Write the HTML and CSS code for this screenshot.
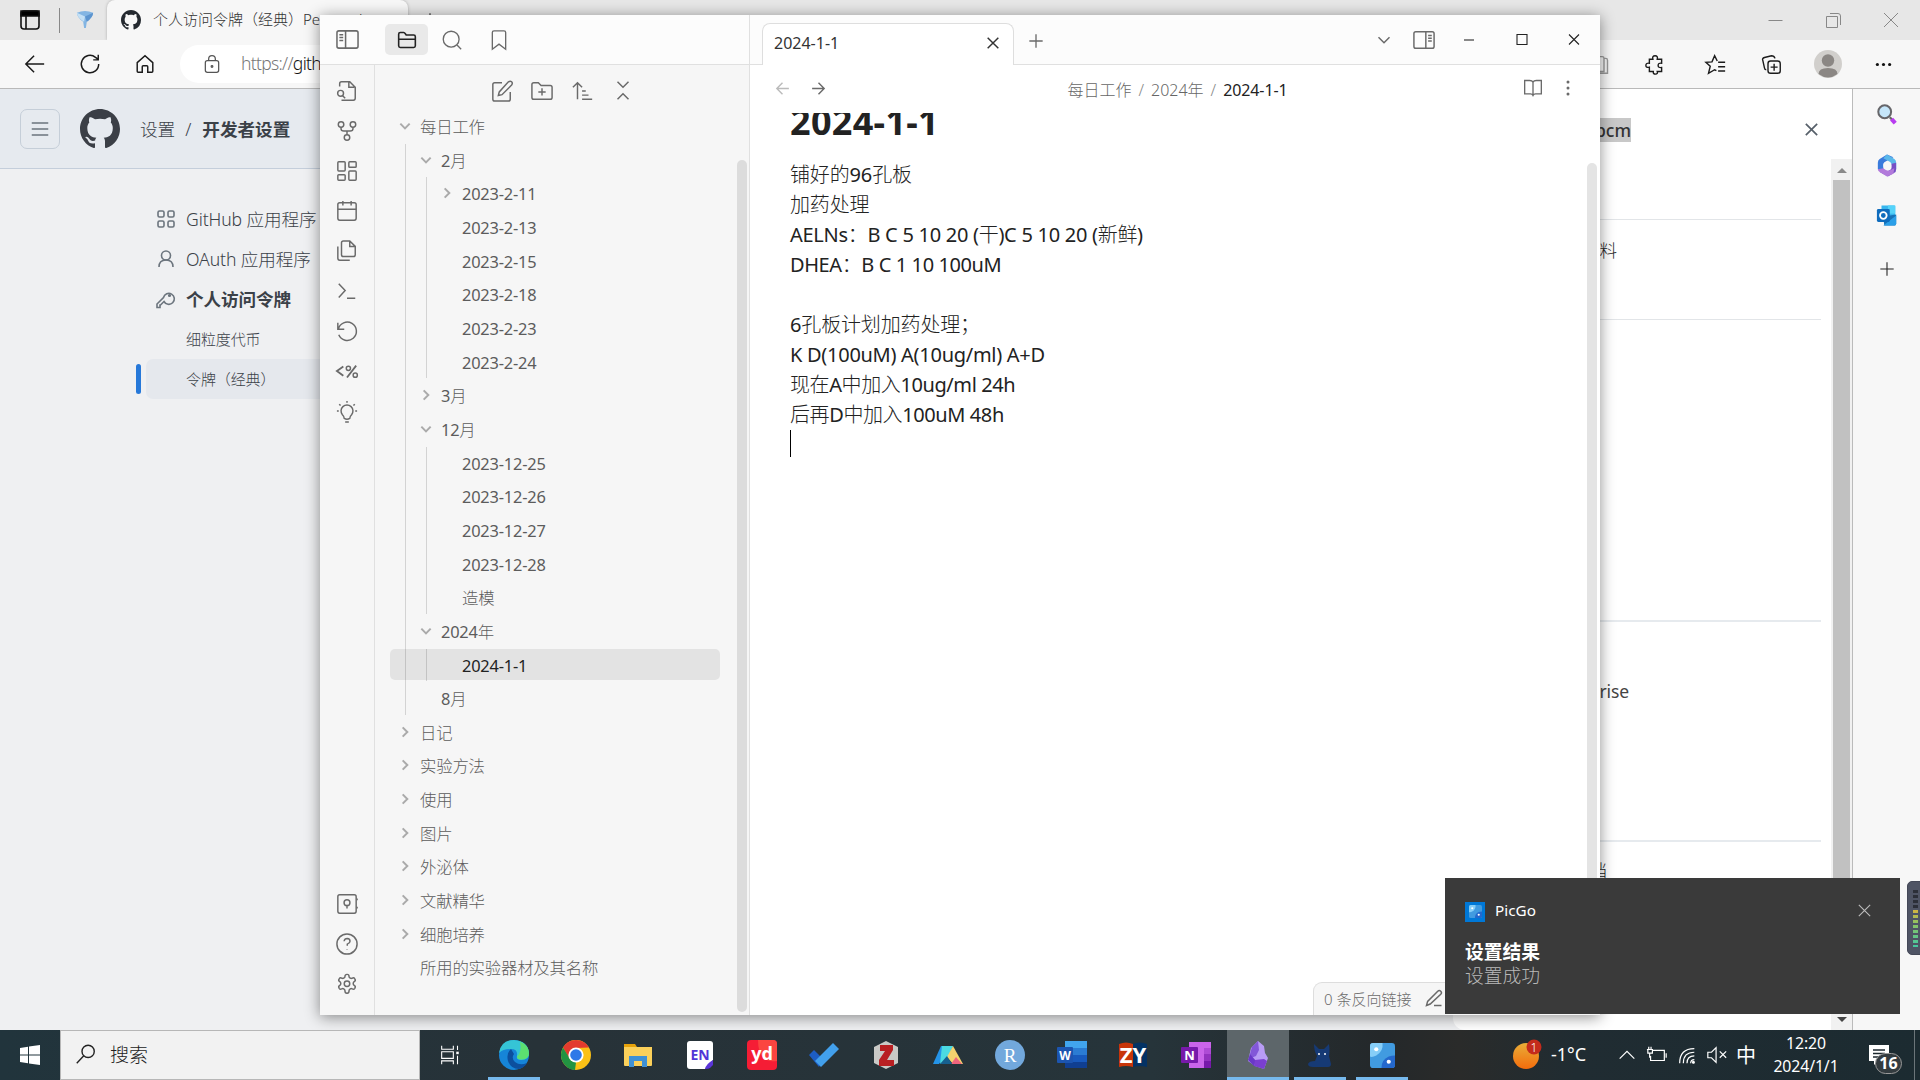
FILE: index.html
```html
<!DOCTYPE html>
<html lang="zh-CN">
<head>
<meta charset="utf-8">
<title>2024-1-1 - Obsidian</title>
<link rel="stylesheet" href="styles.css">
</head>
<body>
<svg class="sprite" aria-hidden="true">
  <symbol id="github" viewBox="0 0 16 16"><path fill="currentColor" stroke="none" d="M8 0C3.58 0 0 3.58 0 8c0 3.54 2.29 6.53 5.47 7.59.4.07.55-.17.55-.38 0-.19-.01-.82-.01-1.49-2.01.37-2.53-.49-2.69-.94-.09-.23-.48-.94-.82-1.13-.28-.15-.68-.52-.01-.53.63-.01 1.08.58 1.23.82.72 1.21 1.87.87 2.33.66.07-.52.28-.87.51-1.07-1.78-.2-3.64-.89-3.64-3.95 0-.87.31-1.59.82-2.15-.08-.2-.36-1.02.08-2.12 0 0 .67-.21 2.2.82.64-.18 1.32-.27 2-.27.68 0 1.36.09 2 .27 1.53-1.04 2.2-.82 2.2-.82.44 1.1.16 1.92.08 2.12.51.56.82 1.27.82 2.15 0 3.07-1.87 3.75-3.65 3.95.29.25.54.73.54 1.48 0 1.07-.01 1.93-.01 2.2 0 .21.15.46.55.38A8.013 8.013 0 0016 8c0-4.42-3.58-8-8-8z"/></symbol>
  <symbol id="down" viewBox="0 0 24 24"><path d="m4 8 8 8 8-8"/></symbol>
  <symbol id="right" viewBox="0 0 24 24"><path d="m8 4 8 8-8 8"/></symbol>
  <symbol id="close" viewBox="0 0 24 24"><path d="M4 4l16 16M20 4 4 20"/></symbol>
  <symbol id="plus" viewBox="0 0 24 24"><path d="M12 2v20M2 12h20"/></symbol>
  <symbol id="picgo" viewBox="0 0 24 24"><rect width="24" height="24" rx="3" fill="#419be0" stroke="none"/><path fill="#86ceF8" stroke="none" d="M3 0h9q1 8-6 12-4 2-6 1V3q0-3 3-3z"/><path fill="#2468cc" stroke="none" d="M24 12v9q0 3-3 3H11q0-8 7-11 3-1 6-1z"/><circle cx="6" cy="6" r="2" fill="#fff" stroke="none"/><circle cx="18" cy="18" r="2" fill="#fff" stroke="none"/></symbol>
</svg>

<div class="browser">
  <div class="tabstrip">
    <svg class="tabs-menu" viewBox="0 0 24 24"><rect x="3" y="3" width="18" height="18" rx="3"/><path fill="#000" d="M3 3h18v5H3zM8 8v13"/></svg>
    <i class="strip-sep"></i>
    <svg class="filter" viewBox="0 0 20 20"><path fill="#83b5e3" d="M1 2q9-4 18 0 0 5-7 10l-1 7H9l-1-7Q1 7 1 2z"/><path fill="#c4e0f5" d="M1 2l9 4-1 6Q1 7 1 2z"/><path fill="#5c94cf" d="M19 2l-9 4 2 6q7-5 7-10z"/></svg>
    <div class="browser-tab"><svg><use href="#github"/></svg><span>个人访问令牌（经典）Personal</span></div>
    <svg class="new-tab" viewBox="0 0 24 24"><use href="#plus"/></svg>
    <div class="win-buttons">
      <svg viewBox="0 0 24 24"><path d="M4.500 12.500h14"/></svg>
      <svg viewBox="0 0 24 24"><path d="M5.500 8.500h11v11h-11zM9 5.500h8q2.500 0 2.500 2.500v9"/></svg>
      <svg viewBox="0 0 24 24"><path d="m5 5 14 14M19 5 5 19"/></svg>
    </div>
  </div>
  <div class="navbar">
    <svg viewBox="0 0 24 24"><path d="M22 12H2M11 3l-9 9 9 9"/></svg>
    <svg viewBox="0 0 24 24"><path d="M21.500 12A9.500 9.500 0 1 1 18 4.700L21 7M21 2v5.500h-5.500"/></svg>
    <svg viewBox="0 0 24 24"><path d="M3.500 10.500 12 3l8.500 7.500V20q0 1-1 1H15v-6q0-1-1-1h-4q-1 0-1 1v6H4.500q-1 0-1-1z"/></svg>
    <div class="address">
      <svg viewBox="0 0 24 24"><rect x="4" y="8" width="16" height="14" rx="2.500"/><path d="M8 8V6q0-4 4-4t4 4v2"/><circle cx="12" cy="15" r="1"/></svg>
      <span><em>https://</em>github.com</span>
    </div>
    <div class="nav-tools">
      <svg class="split" viewBox="0 0 24 24"><path d="M4 3h10q2 0 2 2v15H4zM16 5h2q2 0 2 2v15H9"/></svg>
      <svg viewBox="0 0 24 24"><path d="M5 6h4q-1-4 2.500-4T14 6h5v4.500q-4-.5-4 2.500t4 2.500V20h-5q1 3-2 3t-2.500-3H5v-5q-4 1-4-2t4-2.500z"/></svg>
      <i></i>
      <svg viewBox="0 0 24 24"><path d="M14 8 11 2 8 9l-7 .5L6 14l-2 8 7-4 2 1M15 9.500h8M15 14.500h8M15 19.500h8"/></svg>
      <svg viewBox="0 0 24 24"><rect x="8" y="8" width="14" height="14" rx="3"/><path d="M15 11v8M11 15h8M6 18q-2 0-2-2L2 7q-1-2 2-3l8-2q3 0 4 3"/></svg>
      <svg class="avatar" viewBox="0 0 28 28"><circle cx="14" cy="14" r="14" fill="#d1cfcc"/><circle cx="14" cy="10.500" r="6.200" fill="#8b8784"/><path fill="#8b8784" d="M4.500 24q0-6 9.500-6t9.500 6Q14 31 4.500 24z"/></svg>
      <svg class="dots" viewBox="0 0 24 24"><circle cx="5" cy="12" r="1.800"/><circle cx="12" cy="12" r="1.800"/><circle cx="19" cy="12" r="1.800"/></svg>
    </div>
  </div>
  <div class="viewport">
    <div class="page">
      <div class="gh-header">
        <span class="burger"><svg viewBox="0 0 24 24"><path d="M1 4h22M1 12h22M1 20h22"/></svg></span>
        <svg class="gh-mark"><use href="#github"/></svg>
        <span class="gh-path">设置</span><span class="gh-slash">/</span><b>开发者设置</b>
      </div>
      <div class="gh-nav">
        <div class="gh-item"><svg viewBox="0 0 20 20"><rect x="2" y="2" width="6" height="6" rx="1.500"/><rect x="12" y="2" width="6" height="6" rx="1.500"/><rect x="2" y="12" width="6" height="6" rx="1.500"/><rect x="12" y="12" width="6" height="6" rx="1.500"/></svg>GitHub 应用程序</div>
        <div class="gh-item"><svg viewBox="0 0 20 20"><circle cx="10" cy="6.500" r="4.500"/><path d="M3 18q0-7 7-7t7 7"/></svg>OAuth 应用程序</div>
        <div class="gh-item strong"><svg viewBox="0 0 20 20"><path d="M8 12.500 4.500 16H4v2.500H1V15l6.500-6.500A5.500 5.500 0 1 1 8 12.500z"/><circle cx="13.500" cy="6.500" r=".8"/></svg>个人访问令牌</div>
        <div class="gh-item sub">细粒度代币</div>
        <div class="gh-item sub current">令牌（经典）</div>
      </div>
      <div class="drawer">
        <div class="drawer-head"><span><mark>bcm</mark></span><svg viewBox="0 0 24 24"><use href="#close"/></svg></div>
        <div class="drawer-body">
          <div class="group g1"></div>
          <div class="group g2"><span>料</span></div>
          <div class="group g3"></div>
          <div class="group g4"><span>Enterprise</span></div>
          <div class="group g5"><span>档</span></div>
        </div>
      </div>
      <div class="page-scroll"><svg viewBox="0 0 12 8"><path d="m0 7 6-6 6 6z"/></svg><i></i><svg class="low" viewBox="0 0 12 8"><path d="m0 1 6 6 6-6z"/></svg></div>
    </div>
    <div class="edge-side">
      <svg viewBox="0 0 24 24"><circle cx="9.500" cy="9" r="7" fill="#c5e6fa" stroke="#66666a" stroke-width="2.200"/><path d="m15 15 2.500 2.500" stroke="#666" stroke-width="2.500"/><path d="m17 17 4 4.500" stroke="#b83cf0" stroke-width="4.500"/></svg>
      <svg viewBox="0 0 24 24"><path fill="#3a7bdc" d="M12 0 4 5Q2 6 2 9v7l6 4V11q0-2 2-3l9-5z"/><path fill="#5ab8ea" d="m12 0 8 5q2 1 2 4v7l-5-5q0-2-2-3L8 4z"/><path fill="#7550c5" d="M22 9v7q0 3-2 4l-7 4-9-5 9-1q4-1 4-4v-4z"/><path fill="#b27adb" d="m2 16 6-1q4 4 8 2l4-2-1 6-7 3-8-5q-2-1-2-3z"/><circle cx="12" cy="12" r="4" fill="#f7f7f7"/></svg>
      <svg viewBox="0 0 24 24"><path fill="#37b6ee" d="M6 1h14l1 1v16H6z"/><path fill="#55d3fa" d="M13 1h8v9h-8z"/><path fill="#1673b8" d="m8 13 14-2v10l-1 2H9z"/><path fill="#2a9fe8" d="m8 23 14-11v9q0 2-2 2z"/><rect x="1" y="5" width="14" height="14" rx="1.500" fill="#0f6cbd"/><circle cx="8" cy="12" r="3.600" stroke="#fff" stroke-width="2"/></svg>
      <svg class="add" viewBox="0 0 24 24"><use href="#plus"/></svg>
    </div>
  </div>
</div>

<div class="obsidian">
  <div class="left-top">
    <svg viewBox="0 0 24 24"><rect x="1" y="3" width="22" height="18" rx="2"/><path d="M10 3v18M3.500 7h4M3.500 10h4M3.500 13h4"/></svg>
    <span class="active-tool"><svg viewBox="0 0 24 24"><path d="M2 19V5q0-2 2-2h4q1 0 2 1.500L11 6h9q2 0 2 2v11q0 2-2 2H4q-2 0-2-2zM2 11h20"/></svg></span>
    <svg viewBox="0 0 24 24"><circle cx="11" cy="11" r="9.500"/><path d="m18 18 5 5"/></svg>
    <svg viewBox="0 0 24 24"><path d="m20 23-8-6-8 6V3q0-2 2-2h12q2 0 2 2z"/></svg>
  </div>
  <div class="main-top">
    <div class="note-tab"><span>2024-1-1</span><svg viewBox="0 0 24 24"><use href="#close"/></svg></div>
    <svg class="tab-add" viewBox="0 0 24 24"><use href="#plus"/></svg>
    <div class="app-buttons">
      <svg viewBox="0 0 24 24"><path d="m6 9 6 6 6-6"/></svg>
      <svg viewBox="0 0 24 24"><rect x="1" y="3" width="22" height="18" rx="2"/><path d="M14 3v18M16.500 7h4M16.500 10h4M16.500 13h4"/></svg>
      <svg viewBox="0 0 24 24"><path d="M7 12h10"/></svg>
      <svg viewBox="0 0 24 24"><path d="M7 6.500h10v10H7z"/></svg>
      <svg viewBox="0 0 24 24"><path d="m7 6.500 10 10M17 6.500l-10 10"/></svg>
    </div>
  </div>
  <div class="ribbon">
    <svg viewBox="0 0 24 24"><path d="M4 7V4q0-2 2-2h9l6 6v12q0 2-2 2H6M14 2v6h6"/><circle cx="5" cy="14.500" r="3.200"/><path d="m7 17 3 3"/></svg>
    <svg viewBox="0 0 24 24"><circle cx="12" cy="19" r="3"/><circle cx="5.500" cy="5" r="3"/><circle cx="18.500" cy="5" r="3"/><path d="M5.500 8v1.500q0 2.500 3 2.500h7q3 0 3-2.500V8M12 12v4"/></svg>
    <svg viewBox="0 0 24 24"><rect x="2" y="2" width="8" height="10" rx="1"/><rect x="14" y="2" width="8" height="6" rx="1"/><rect x="14" y="12" width="8" height="10" rx="1"/><rect x="2" y="16" width="8" height="6" rx="1"/></svg>
    <svg viewBox="0 0 24 24"><rect x="2" y="3" width="20" height="19" rx="2"/><path d="M2 10h20M7.500 1v5M16.500 1v5"/></svg>
    <svg viewBox="0 0 24 24"><path d="M15 1H8Q6 1 6 3v13q0 2 2 2h11q2 0 2-2V7zM15 1v6h6M2 7v13q0 2 2 2h11"/></svg>
    <svg viewBox="0 0 24 24"><path d="m3 4 7 7.500L3 19M12 20h9"/></svg>
    <svg viewBox="0 0 24 24"><path d="M2 2v7h7M2.500 9A10 10 0 1 1 3 15"/></svg>
    <svg viewBox="0 0 24 24"><path stroke-width="2" d="M8 6 1 11l7 5M22 5 12 18"/><circle cx="13.500" cy="8" r="2.300"/><circle cx="21" cy="15.500" r="2.300"/></svg>
    <svg viewBox="0 0 24 24"><path d="M9 19q0-2-2-4a6.500 6.500 0 1 1 10 0q-2 2-2 4-3 2-6 0zM10 23h4M12 0v2M1 11h2M21 11h2M3.500 3.500 5 5M20.500 3.500 19 5"/></svg>
    <span class="fill"></span>
    <svg viewBox="0 0 24 24"><rect x="2" y="2" width="20" height="20" rx="2"/><circle cx="12" cy="10.500" r="3.200"/><path d="M12 14v3M23 6v2M23 15v2"/></svg>
    <svg viewBox="0 0 24 24"><circle cx="12" cy="12" r="11"/><path d="M8.800 9q.5-3 3.500-3 3 .3 3 3 0 2-3 3.200V14M12 17.500v.5"/></svg>
    <svg viewBox="0 0 24 24"><path d="M12.200 1.500h-.4a2 2 0 0 0-2 2v.2a2 2 0 0 1-1 1.700l-.4.300a2 2 0 0 1-2 0l-.2-.1a2 2 0 0 0-2.700.7l-.2.400a2 2 0 0 0 .7 2.700l.2.100a2 2 0 0 1 1 1.700v.5a2 2 0 0 1-1 1.800l-.2.100a2 2 0 0 0-.7 2.700l.2.400a2 2 0 0 0 2.700.7l.2-.1a2 2 0 0 1 2 0l.4.300a2 2 0 0 1 1 1.700v.7a2 2 0 0 0 2 2h.4a2 2 0 0 0 2-2v-.7a2 2 0 0 1 1-1.700l.4-.3a2 2 0 0 1 2 0l.2.100a2 2 0 0 0 2.700-.7l.2-.4a2 2 0 0 0-.7-2.700l-.2-.1a2 2 0 0 1-1-1.800v-.5a2 2 0 0 1 1-1.700l.2-.1a2 2 0 0 0 .7-2.700l-.2-.4a2 2 0 0 0-2.700-.7l-.2.100a2 2 0 0 1-2 0l-.4-.3a2 2 0 0 1-1-1.700v-.2a2 2 0 0 0-2-2z"/><circle cx="12" cy="11.800" r="3"/></svg>
  </div>
  <div class="explorer">
    <div class="explorer-tools">
      <svg viewBox="0 0 24 24"><path d="M12 3H4Q2 3 2 5v16q0 2 2 2h15q2 0 2-2v-8M19 2q2-1.500 3.500 0t0 3.500L12 16l-4 1 1-4z"/></svg>
      <svg viewBox="0 0 24 24"><path d="M1 19V5q0-2 2-2h5l3 3h10q2 0 2 2v11q0 2-2 2H3q-2 0-2-2zM12 9v8M8 13h8"/></svg>
      <svg viewBox="0 0 24 24"><path d="M1 8l5-5 5 5M6 3v18M11 12h4M11 16.500h7M11 21h11"/></svg>
      <svg viewBox="0 0 24 24"><path d="m6 2 6 6 6-6M6 21l6-6 6 6"/></svg>
    </div>
    <div class="tree">
      <div class="row"><svg><use href="#down"/></svg>每日工作</div>
      <div class="kids">
        <div class="row"><svg><use href="#down"/></svg>2月</div>
        <div class="kids">
          <div class="row"><svg><use href="#right"/></svg>2023-2-11</div>
          <div class="row">2023-2-13</div>
          <div class="row">2023-2-15</div>
          <div class="row">2023-2-18</div>
          <div class="row">2023-2-23</div>
          <div class="row">2023-2-24</div>
        </div>
        <div class="row"><svg><use href="#right"/></svg>3月</div>
        <div class="row"><svg><use href="#down"/></svg>12月</div>
        <div class="kids">
          <div class="row">2023-12-25</div>
          <div class="row">2023-12-26</div>
          <div class="row">2023-12-27</div>
          <div class="row">2023-12-28</div>
          <div class="row">造模</div>
        </div>
        <div class="row"><svg><use href="#down"/></svg>2024年</div>
        <div class="kids">
          <div class="row open">2024-1-1</div>
        </div>
        <div class="row">8月</div>
      </div>
      <div class="row"><svg><use href="#right"/></svg>日记</div>
      <div class="row"><svg><use href="#right"/></svg>实验方法</div>
      <div class="row"><svg><use href="#right"/></svg>使用</div>
      <div class="row"><svg><use href="#right"/></svg>图片</div>
      <div class="row"><svg><use href="#right"/></svg>外泌体</div>
      <div class="row"><svg><use href="#right"/></svg>文献精华</div>
      <div class="row"><svg><use href="#right"/></svg>细胞培养</div>
      <div class="row">所用的实验器材及其名称</div>
    </div>
    <i class="tree-scroll"></i>
  </div>
  <div class="editor">
    <div class="view-header">
      <svg class="dim" viewBox="0 0 24 24"><path d="M21 12H4M12 4l-8 8 8 8"/></svg>
      <svg viewBox="0 0 24 24"><path d="M3 12h17M12 4l8 8-8 8"/></svg>
      <div class="crumbs"><span>每日工作</span><em>/</em><span>2024年</span><em>/</em><b>2024-1-1</b></div>
      <svg class="book" viewBox="0 0 24 24"><path d="M12 5q-1-2-4-2H2v16h7q2 0 3 2 1-2 3-2h7V3h-6q-3 0-4 2zM12 5v16"/></svg>
      <svg class="more" viewBox="0 0 24 24"><circle cx="12" cy="4" r="1"/><circle cx="12" cy="12" r="1"/><circle cx="12" cy="20" r="1"/></svg>
    </div>
    <div class="note">
      <h1>2024-1-1</h1>
      <p>铺好的96孔板</p>
      <p>加药处理</p>
      <p class="dose">AELNs：B C 5 10 20 (干)C 5 10 20 (新鲜)</p>
      <p class="mixed">DHEA：B C 1 10 100uM</p>
      <p></p>
      <p>6孔板计划加药处理；</p>
      <p class="dose">K D(100uM) A(10ug/ml) A+D</p>
      <p class="mixed">现在A中加入10ug/ml 24h</p>
      <p class="mixed">后再D中加入100uM 48h</p>
      <p><i class="caret"></i></p>
    </div>
    <i class="note-scroll"></i>
    <div class="status"><span>0 条反向链接</span><svg viewBox="0 0 24 24"><path d="M12 22h10M17 3q2-2 4 0t0 4L7 20l-5 2 1.500-5.500z"/></svg></div>
  </div>
</div>

<div class="toast">
  <div class="toast-app"><span class="toast-icon"><svg><use href="#picgo"/></svg></span><span>PicGo</span><svg class="toast-close" viewBox="0 0 24 24"><use href="#close"/></svg></div>
  <b>设置结果</b>
  <p>设置成功</p>
</div>
<div class="meter"><i></i></div>

<div class="taskbar">
  <div class="start"><svg viewBox="0 0 20 20"><path fill="#fff" d="M0 3l8-1.200V9.500H0zM9 1.600 20 0v9.500H9zM0 10.500h8v7.700L0 17zM9 10.500h11V20L9 18.400z"/></svg></div>
  <div class="search"><svg viewBox="0 0 24 24"><circle cx="15" cy="8.500" r="7"/><path d="M10 13.500 2 22"/></svg>搜索</div>
  <div class="apps">
    <span class="slot tv"><svg viewBox="0 0 24 24"><path d="M2 1v4h14V1M2 23v-4h14v4M2 8h14v8H2zM21 1v5M21 13v10"/><path fill="#fff" stroke="none" d="M19.500 8h3v3h-3z"/></svg></span>
    <span class="slot run"><svg viewBox="0 0 30 30"><circle cx="15" cy="15" r="15" fill="#1685d8"/><path fill="#35c4d6" d="M0 13Q2 0 15 0q14 1 15 13 0 7-8 7-5 0-4-4 1-7-6-7-8 0-12 4z"/><path fill="#5ce070" d="M21 1.500q9 4 9 12 0 6-8 6-4 0-4-3 5-4 3-15z"/><path fill="#0c4f9e" d="M12 9q-5 4-3 12 3 8 11 8 6-2 8-6-7 3-12-1-4-4-1-8z"/></svg></span>
    <span class="slot"><svg viewBox="0 0 30 30"><circle cx="15" cy="15" r="15" fill="#fbc116"/><path fill="#e33b2e" d="M2 7.500A15 15 0 0 1 28 7.500L15 8l-6.500 11z"/><path fill="#229342" d="M2 7.500 9 19l6 3.500L14 30A15 15 0 0 1 2 7.500z"/><circle cx="15" cy="15" r="7.600" fill="#fff"/><circle cx="15" cy="15" r="5.800" fill="#2f79e8"/></svg></span>
    <span class="slot"><svg viewBox="0 0 30 30"><path fill="#e6a20b" d="M1 4h11l2 3v5H1z"/><path fill="#fbd05a" d="M1 7h28v18q0 1-1 1H2q-1 0-1-1z"/><path fill="#3f90d4" d="M6 27V16h18v11h-5v-6h-8v6z"/></svg></span>
    <span class="slot"><svg viewBox="0 0 30 30"><path fill="#fff" d="M5 1h20q3 0 3 3v16l-8 9H5q-3 0-3-3V4q0-3 3-3z"/><path fill="#5a35d8" d="M28 20v5l-3 3q-1 1-5 1 1-5 8-9z"/><text x="15" y="20" font-size="14" font-weight="700" fill="#5236d6">EN</text></svg></span>
    <span class="slot"><svg viewBox="0 0 30 30"><rect width="30" height="30" rx="4" fill="#f51d35"/><path fill="#fb4540" d="M11 0h15q4 0 4 4v17Q11 24 11 0z"/><text x="15" y="20" font-size="18" font-weight="700" fill="#fff">yd</text></svg></span>
    <span class="slot"><svg viewBox="0 0 30 30"><path fill="#1d5dc4" d="m0 15 5-5 9 9-4 8z"/><path fill="#42a0ec" d="M24 3l6 6-18 18-6-6z"/></svg></span>
    <span class="slot"><svg viewBox="0 0 30 30"><path fill="#c9c9c6" d="M15 1 27 7v16l-12 6L3 23V7z"/><path fill="#b81f22" d="M9 5h13v5l-6 10h7v6H8v-6l6-9H9z"/></svg></span>
    <span class="slot"><svg viewBox="0 0 30 30"><path fill="#2494e8" d="M8 6h12L6 24H0z"/><path fill="#4bdae2" d="M9 6h11L14 20 7 24z"/><path fill="#f5d36e" d="M20 6 30 24H20l-6-7z"/><path fill="#f1657d" d="m23 17 6 7H18z"/><path fill="#17608f" d="m14 16 5 8H7z"/></svg></span>
    <span class="slot"><svg viewBox="0 0 30 30"><circle cx="15" cy="15" r="15" fill="#72a8dc"/><text class="serif" x="15" y="21.500" font-size="19" fill="#fff">R</text></svg></span>
    <span class="slot"><svg viewBox="0 0 30 30"><path fill="#41a5ee" d="M8 1h22v7H8z"/><path fill="#2b7cd3" d="M8 8h22v7H8z"/><path fill="#185abd" d="M8 15h22v7H8z"/><path fill="#103f91" d="M8 22h22v6H8z"/><rect y="7" width="16" height="16" rx="1" fill="#1c55b0"/><text x="8" y="19.500" font-size="12" font-weight="700" fill="#fff">W</text></svg></span>
    <span class="slot zy"><svg viewBox="0 0 30 30"><path fill="#c8350a" d="M1 4q7-3 14 0v23q-7-2-14 0z"/><path fill="#043264" d="M15 4q7-3 14 0v23q-7-2-14 0z"/><text x="15" y="23" font-size="22" font-weight="700" fill="#fff">ZY</text></svg></span>
    <span class="slot"><svg viewBox="0 0 30 30"><path fill="#ca64ea" d="M8 2h22v26H8z"/><path fill="#ae4bd5" d="M23 8h7v6h-7z"/><path fill="#9332bf" d="M23 14h7v7h-7z"/><path fill="#7719aa" d="M23 21h7v7h-7z"/><rect y="7" width="17" height="16" rx="1" fill="#7719aa"/><text x="8.500" y="19.500" font-size="13" font-weight="700" fill="#fff">N</text></svg></span>
    <span class="slot run focus"><svg viewBox="0 0 30 30"><path fill="#b89cf5" d="m15 1 6 5 1 7 3 5-4 11-9-3-7-5 3-13z"/><path fill="#8257d8" d="m15 1 1 9-3 6-5 2-1-4 2-7z"/><path fill="#6a38c8" d="m7 14 6 7-2 5-6-6z"/><path fill="#7a3fd0" d="m12 20 9-1 3 2-3 8-10-3z"/></svg></span>
    <span class="slot run cat"><svg viewBox="0 0 30 30"><path fill="#163a75" d="M9 4l5 5h5l5-5q1 8 0 12l2 8q0 3-3 3H8q-5 0-5-3 1-3 7-3l2-5q-3-5-3-12z"/><circle cx="14" cy="14" r="1" fill="#fff"/><circle cx="20" cy="14" r="1" fill="#fff"/></svg></span>
    <span class="slot run"><svg class="small"><use href="#picgo"/></svg></span>
  </div>
  <div class="tray">
    <svg class="weather" viewBox="0 0 32 32"><defs><linearGradient id="sun" x2="0" y2="1"><stop offset="0" stop-color="#e9ad38"/><stop offset="1" stop-color="#f46c0c"/></linearGradient></defs><circle cx="13" cy="17" r="13" fill="url(#sun)"/><circle cx="21" cy="8" r="7.500" fill="#c42b1c"/><text x="21" y="12.500" font-size="12" fill="#fff">1</text></svg>
    <span class="temp">-1°C</span>
    <svg class="t-up" viewBox="0 0 24 24"><path d="m4 16 8-8 8 8"/></svg>
    <svg class="t-bat" viewBox="0 0 24 24"><path d="M7 7h13v11H5v-5M22 10v5M1 6h6v4H2V6M3 3v3M5.500 3v3M4 10v5"/></svg>
    <svg class="t-wifi" viewBox="0 0 24 24"><path d="M4 21Q4 5 20 5M8 21Q8 9 20 9M12 21q0-8 8-8M16 21q0-4 4-4"/><circle cx="19" cy="20" r="1" fill="#fff"/></svg>
    <svg class="t-vol" viewBox="0 0 24 24"><path d="M2 9h4l5-5v16l-5-5H2zM15 8l7 7M22 8l-7 7"/></svg>
    <span class="ime">中</span>
    <div class="clock"><span>12:20</span><span>2024/1/1</span></div>
    <div class="notice"><svg viewBox="0 0 20 20"><path fill="#fff" d="M0 0h20v16H9l-4 4v-4H0z"/><path stroke="#1d292f" stroke-width="1.500" d="M4 5h12M4 8.500h12M4 12h8"/></svg><b>16</b></div>
    <i class="peek"></i>
  </div>
</div>
</body>
</html>
```
FILE: styles.css
```css
* { box-sizing: border-box; }
body {
  margin: 0; width: 1920px; height: 1080px; overflow: hidden; position: relative;
  font-family: "Noto Sans", "Noto Sans CJK SC", sans-serif; font-weight: 300;
  background: #eff0f2; color: #222;
}
svg { display: block; flex: none; fill: none; stroke: currentColor; stroke-width: 1.6; width: 20px; height: 20px; overflow: visible; }
i, em { font-style: normal; }
span { white-space: nowrap; }
.sprite { position: absolute; width: 0; height: 0; }

/* browser window */
.browser { position: absolute; inset: 0 0 50px; display: flex; flex-direction: column; }
.tabstrip { height: 40px; background: #e7e7e7; display: flex; flex: none; align-items: center; padding-left: 18px; }
.tabs-menu { width: 24px; height: 24px; color: #111; }
.strip-sep { width: 1px; height: 25px; background: #888; margin: 0 16px 0 17px; }
.filter { width: 18px; height: 20px; stroke: none; margin-right: 13px; }
.browser-tab {
  width: 301px; height: 40px; background: #f7f7f7; border-radius: 8px 8px 0 0; box-shadow: 0 0 3px #aaa;
  display: flex; align-items: center; padding-left: 14px; gap: 12px; font-size: 15px; line-height: 20px; color: #333; overflow: hidden;
}
.browser-tab span { margin-top: -3px; }
.browser-tab svg { color: #24292f; }
.new-tab { width: 16px; height: 16px; margin-left: 14px; }
.win-buttons { margin-left: auto; display: flex; gap: 34px; padding-right: 17px; color: #888; }
.win-buttons svg { width: 24px; height: 24px; stroke-width: 1; }
.win-buttons svg:first-child { margin-right: -1px; }
.navbar { height: 49px; flex: none; background: #f7f7f7; border-bottom: 1px solid #b9b9b9; display: flex; align-items: center; padding-left: 24px; color: #1b1b1b; }
.navbar > svg { width: 22px; height: 22px; margin-right: 33px; }
.address { height: 38px; width: 1500px; margin-left: -9px; background: #fff; border-radius: 19px 0 0 19px; display: flex; align-items: center; padding-left: 22px; gap: 19px; font-size: 17.5px; color: #111; letter-spacing: -.7px; }
.address span { margin-top: -2px; }
.address svg { color: #555; stroke-width: 1.5; }
.address em { color: #777; }
.nav-tools { display: flex; align-items: center; margin-left: -88px; background: #f7f7f7; height: 48px; width: 328px; }
.nav-tools svg { width: 21px; height: 21px; margin-right: 35px; }
.nav-tools .split { color: #999; margin-right: 34px; margin-left: -2px; }
.nav-tools i { width: 1px; height: 20px; background: #bbb; margin: 0 20px 0 -16px; }
.nav-tools svg:nth-of-type(4) { margin-right: 33px; }
.nav-tools svg.avatar { width: 28px; height: 28px; stroke: none; margin: 0 31px 0 -1px; }
.nav-tools .dots { fill: #111; stroke: none; }
.viewport { flex: 1; display: flex; min-height: 0; }
.page { width: 1853px; position: relative; border-right: 1px solid #bbb; overflow: hidden; background: #eff0f2; }
.gh-header { height: 80px; background: #e6eaef; border-bottom: 1px solid #c4cedb; display: flex; align-items: center; padding-left: 20px; font-size: 17.6px; color: #3b4148; }
.gh-header b { font-weight: 700; }
.burger { width: 40px; height: 40px; border: 1px solid #c5ced8; border-radius: 7px; display: grid; place-items: center; color: #6b747e; margin-right: 20px; }
.burger svg { width: 18px; height: 18px; stroke-width: 2; }
.gh-mark { width: 40px; height: 40px; color: #3b3f46; margin-right: 20px; }
.gh-slash { margin: 0 11px 0 10px; }
.gh-nav { padding: 30px 0 0 146px; width: 420px; display: flex; flex-direction: column; }
.gh-item { height: 40px; display: flex; align-items: center; gap: 10px; padding: 0 0 2px 10px; font-size: 17.6px; color: #3b4148; letter-spacing: -.1px; }
.gh-item svg { color: #6c757e; margin-top: 2px; }
.gh-item.strong { font-weight: 700; }
.gh-item.sub { font-size: 15px; padding-left: 40px; }
.gh-item.current { background: #e5e8ed; border-radius: 7px; position: relative; }
.gh-item.current::before { content: ""; position: absolute; left: -10px; top: 5px; width: 5px; height: 30px; border-radius: 3px; background: #2678d9; }
.drawer { position: absolute; inset: 0 0 0 1453px; background: #fff; border-radius: 0 0 0 12px; display: flex; flex-direction: column; }
.drawer-head { height: 70px; display: flex; align-items: center; padding: 11px 32px 0 0; font-size: 17.5px; font-weight: 500; }
.drawer-head span { width: 178px; text-align: right; line-height: 22px; }
.drawer-head svg { width: 17px; height: 17px; margin-left: auto; color: #57606a; stroke-width: 2.4; }
mark { background: #c8c8c8; color: #333; }
.drawer-body { flex: 1; overflow: hidden; padding-right: 31px; font-size: 17.5px; }
.group { border-bottom: 1px solid #e2e5e8; text-align: right; line-height: 24px; }
.g1 { height: 61px; }
.g2 { height: 100px; padding: 18px 204px 0 0; }
.g3 { height: 302px; border-bottom: 2px solid #e6eaee; }
.g4 { height: 220px; padding: 57px 192px 0 0; border-bottom: 2px solid #e6eaee; font-weight: 400; letter-spacing: -.1px; color: #444; }
.g5 { padding: 16px 214px 0 0; border: 0; }
.page-scroll { position: absolute; right: 0; top: 70px; bottom: 0; width: 21px; background: #f1f1f1; display: flex; flex-direction: column; align-items: center; }
.page-scroll svg { width: 10px; height: 7px; fill: #8a8a8a; stroke: none; margin: 8px 0 6px; }
.page-scroll i { flex: 1; width: 17px; background: #c1c1c1; }
.page-scroll .low { fill: #444; margin-bottom: 7px; }
.edge-side { width: 67px; background: #f7f7f7; display: flex; flex-direction: column; align-items: center; padding-top: 14px; gap: 28px; }
.edge-side svg { width: 22px; height: 23px; stroke: none; }
.edge-side svg:nth-child(3) { margin-top: -1px; }
.edge-side .add { stroke: #222; width: 16px; height: 16px; margin-top: 6px; }

/* notes window */
.obsidian {
  position: absolute; left: 320px; top: 15px; width: 1280px; height: 1000px; background: #fff;
  box-shadow: 0 2px 14px rgba(0,0,0,.45);
  display: grid; grid-template: 50px 1fr / 55px 375px 1fr; color: #6a6a6a;
}
.left-top { grid-column: 1 / 3; background: #fcfcfc; border: solid #e0e0e0; border-width: 0 1px 1px 0; display: flex; align-items: center; padding-left: 16px; }
.left-top > svg { width: 23px; height: 23px; margin-right: 24px; }
.left-top > svg:first-child { margin-right: 26px; }
.left-top > svg:nth-child(3) { width: 20px; height: 20px; margin-right: 27px; }
.left-top svg:last-child { width: 20px; height: 20px; }
.active-tool { width: 43px; height: 31px; margin: 0 14px 0 0; border-radius: 5px; background: #e9e9e9; display: grid; place-items: center; color: #222; }
.active-tool svg { width: 23px; height: 22px; stroke-width: 1.9; }
.main-top { background: #fcfcfc; display: flex; align-items: flex-end; padding-left: 12px; box-shadow: inset 0 -1px #e0e0e0; }
.note-tab { width: 252px; height: 42px; background: #fff; border: 1px solid #dedede; border-bottom: 0; border-radius: 8px 8px 0 0; display: flex; align-items: center; justify-content: space-between; padding: 0 12px 0 11px; font-size: 16px; line-height: 20px; color: #333; font-weight: 400; }
.note-tab span { margin-top: -3px; }
.note-tab svg { width: 16px; height: 16px; stroke-width: 2.2; margin-top: -3px; }
.tab-add { width: 16px; height: 16px; margin: 0 0 16px 14px; stroke-width: 2; }
.app-buttons { margin: 0 14px 13px auto; display: flex; align-items: center; gap: 27px; }
.app-buttons svg { width: 24px; height: 22px; margin-right: 0; }
.app-buttons svg:first-child { margin-right: -11px; }
.app-buttons svg:nth-child(2) { margin-right: -6px; }
.app-buttons svg:nth-child(n+3) { width: 24px; height: 24px; }
.app-buttons svg:nth-child(n+4) { color: #222; stroke-width: 1.1; }
.app-buttons svg:nth-child(3) { margin-right: 2px; }
.app-buttons svg:nth-child(4) { margin-right: 1px; }
.ribbon { background: #f6f6f6; border-right: 1px solid #e0e0e0; display: flex; flex-direction: column; align-items: center; padding: 15px 0 20px; gap: 18.1px; }
.ribbon svg { width: 22px; height: 22px; }
.ribbon .fill { flex: 1; }
.explorer { background: #f6f6f6; border-right: 1px solid #e0e0e0; position: relative; }
.explorer-tools { display: flex; justify-content: center; gap: 18.5px; padding: 15px 0 0 1px; }
.explorer-tools svg { width: 22px; height: 22px; }
.tree { padding: 8px 30px 0 15px; font-size: 16.4px; color: #5c5c5c; font-weight: 400; font-family: "Noto Sans", "Noto Sans CJK SC Light", "Noto Sans CJK SC", sans-serif; letter-spacing: -.2px; }
.row { height: 33.66px; line-height: 34px; padding-left: 30px; position: relative; white-space: nowrap; }
.row svg { position: absolute; left: 8px; top: 9px; width: 14px; height: 14px; color: #aaa; stroke-width: 3.4; }
.kids { padding-left: 21px; position: relative; }
.kids::before { content: ""; position: absolute; left: 15px; top: 0; bottom: 1px; width: 1px; background: rgba(0,0,0,.14); z-index: 2; }
.row.open { color: #222; z-index: 0; }
.row.open::before { content: ""; position: absolute; z-index: -1; left: -42px; width: 330px; top: 0; height: 31px; border-radius: 5px; background: #e3e3e3; }
.tree-scroll { position: absolute; right: 2px; top: 95px; bottom: 3px; width: 10px; border-radius: 5px; background: #dcdcdc; }
.editor { position: relative; display: flex; flex-direction: column; min-height: 0; }
.view-header { height: 48px; flex: none; display: flex; align-items: center; padding: 0 23px 0 24px; font-size: 16px; }
.view-header > svg { width: 17px; height: 17px; stroke-width: 2; margin-right: 19px; margin-top: -2px; }
.view-header .dim { color: #bbb; }
.crumbs { flex: 1; display: flex; justify-content: center; align-items: baseline; padding-right: 14px; color: #666; margin-top: -1px; }
.crumbs em { margin: 0 7px; color: #888; }
.crumbs b { color: #222; font-weight: 400; letter-spacing: -.1px; }
.view-header .book { width: 20px; height: 20px; margin-right: 16px; stroke-width: 1.6; }
.view-header .more { width: 18px; height: 18px; margin-right: 0; }
.note { flex: 1; overflow: hidden; padding-left: 40px; font-size: 20px; color: #222; font-weight: 400; font-family: "Noto Sans", "Noto Sans CJK SC Light", "Noto Sans CJK SC", sans-serif; }
h1 { margin: -10px 0 20px; font-size: 36px; line-height: 37px; letter-spacing: .3px; }
.note p { margin: 0; height: 30px; line-height: 30px; white-space: nowrap; letter-spacing: -.15px; }
.note .mixed { letter-spacing: -.4px; }
.note .dose { letter-spacing: -.28px; }
.caret { display: block; width: 1px; height: 27px; background: #000; }
.note-scroll { position: absolute; right: 3px; top: 98px; bottom: 30px; width: 10px; border-radius: 5px; background: #e4e4e4; }
.status { position: absolute; right: 0; bottom: 0; width: 287px; height: 33px; border: 1px solid #ddd; border-width: 1px 0 0 1px; border-radius: 9px 0 0 0; background: #f6f6f6; display: flex; align-items: center; padding: 0 0 2px 10px; gap: 14px; font-size: 15px; }
.status svg { width: 18px; height: 18px; stroke-width: 2; }

/* notification */
.toast { position: absolute; left: 1445px; top: 878px; width: 455px; height: 136px; background: #3a3a3a; color: #fff; padding: 19px 20px; font-size: 18.8px; line-height: 24px; }
.toast-app { display: flex; align-items: center; gap: 10px; font-size: 15.3px; font-weight: 400; height: 28px; margin-bottom: 15px; }
.toast-app > span { margin-top: -2px; }
.toast-app .toast-icon { margin-top: 1px; }
.toast-icon { width: 20px; height: 20px; background: #0078d7; display: grid; place-items: center; }
.toast-icon svg { width: 13px; height: 13px; }
.toast-close { width: 17px; height: 17px; margin: -1px 7px 0 auto; color: #bbb; }
.toast p { margin: 0; color: #b8b8b8; }
.toast b { display: block; font-weight: 700; }
.meter { position: absolute; left: 1907px; top: 881px; width: 18px; height: 74px; border-radius: 5px; background: #4f5464; border: 1px solid #444857; padding: 8px 0 0 5px; }
.meter i { display: block; width: 5px; height: 57px; background: repeating-linear-gradient(transparent 0 3px, #4f5464 3px 5px), linear-gradient(#2c2f38 0 34%, #d4b441 35%, #8ac265 60%, #45c8a0); }

/* taskbar */
.taskbar { position: absolute; inset: 1030px 0 0; display: flex; color: #fff; background: linear-gradient(90deg, #21343c, #273238 28%, #26343a 60%, #24282a 72%, #2a2b2a 76%, #202c32 82%, #1c2b31); }
.taskbar svg { stroke: none; }
.start { width: 60px; display: grid; place-items: center; }
.search { width: 360px; background: #f2f2f2; border: 1px solid #b7b7b7; display: flex; align-items: center; padding: 0 0 2px 14px; gap: 14px; color: #222; font-size: 19px; }
.search svg { stroke: #222; width: 21px; height: 21px; }
.apps { display: flex; margin-left: 1px; }
.slot { width: 62px; display: grid; place-items: center; position: relative; }
.slot svg { width: 30px; height: 30px; }
.slot.tv { padding-right: 4px; }
.slot.zy { padding-right: 3px; }
.slot.tv svg { width: 22px; height: 20px; stroke: #fff; stroke-width: 1.3; }
.slot.run::after { content: ""; position: absolute; left: 5px; right: 5px; bottom: 0; height: 3px; background: #76b9ed; }
.slot.focus { background: #5d666a; }
.slot.focus::after { left: 0; right: 0; }
.slot svg.small { width: 25px; height: 25px; }
text { font-family: "Noto Sans", sans-serif; text-anchor: middle; }
.serif { font-family: "Liberation Serif", serif; }
.tray { margin-left: auto; display: flex; align-items: center; }
.weather { width: 32px; height: 32px; }
.temp { font-size: 18px; width: 71px; padding-left: 6px; letter-spacing: 0; font-weight: 400; margin-top: -2px; }
.taskbar .tray svg[class^="t-"] { width: 22px; height: 22px; margin-right: 8px; stroke: #fff; stroke-width: 1.3; }
.taskbar .tray svg.t-vol { margin-right: 2px; }
.ime { font-size: 20px; width: 32px; text-align: center; font-weight: 400; margin-top: -2px; }
.clock { width: 88px; height: 46px; display: flex; flex-direction: column; align-items: center; font-size: 15.8px; line-height: 23px; letter-spacing: -.1px; font-weight: 400; margin-top: -1px; }
.notice { position: relative; width: 64px; padding-left: 19px; }
.notice b { position: absolute; left: 25px; top: 8px; width: 27px; height: 21px; border-radius: 12px; border: 1px solid #999; background: #333b3f; font-size: 16px; line-height: 19px; text-align: center; font-weight: 700; }
.peek { width: 6px; height: 50px; border-left: 1px solid #6b7579; }
```
